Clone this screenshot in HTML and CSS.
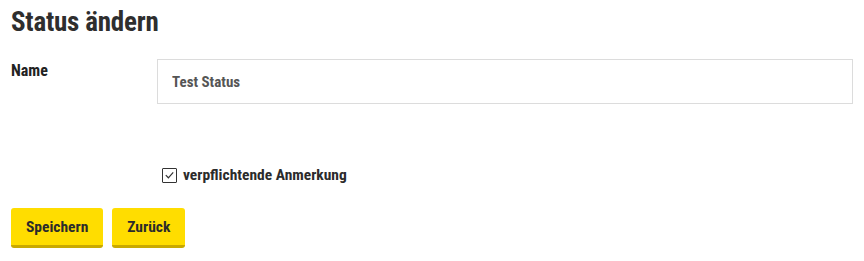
FILE: index.html
```html
<!DOCTYPE html>
<html lang="de">
<head>
<meta charset="utf-8">
<title>Status ändern</title>
<link rel="stylesheet" href="styles.css">
</head>
<body>
<main class="page">
  <h1 class="title">Status ändern</h1>
  <form class="form">
    <div class="row">
      <label class="label" for="name">Name</label>
      <input class="input" id="name" type="text" value="Test Status">
    </div>
    <div class="row row-check">
      <span></span>
      <label class="check">
        <span class="box"><svg viewBox="0 0 14 14" width="14" height="14"><path d="M3 7.2 L5.8 10 L11 4.2" fill="none" stroke="#333" stroke-width="1.3"/></svg></span>
        <span class="check-text">verpflichtende Anmerkung</span>
      </label>
    </div>
    <div class="actions">
      <button class="btn" type="button">Speichern</button>
      <button class="btn" type="button">Zurück</button>
    </div>
  </form>
</main>
</body>
</html>
```
FILE: styles.css
```css
* { box-sizing: border-box; }
html, body { margin: 0; padding: 0; background: #fff; }
body {
  font-family: "Roboto Condensed", "Liberation Sans Narrow", "DejaVu Sans Condensed", "Roboto", sans-serif;
  color: #2b2b2b;
}
.page { padding: 5px 11px 0 11px; }
.title {
  margin: 0;
  font-size: 27px;
  line-height: 34px;
  font-weight: 700;
  color: #2e2e2e;
  letter-spacing: -0.2px;
}
.form { margin-top: 20px; }
.row {
  display: grid;
  grid-template-columns: 146px 1fr;
}
.label {
  font-size: 16px;
  font-weight: 700;
  color: #222;
  padding-top: 2px;
  letter-spacing: 0;
}
.input {
  height: 45px;
  border: 1px solid #dcdcdc;
  border-radius: 0;
  padding: 0 14px;
  font-family: inherit;
  font-size: 15px;
  font-weight: 700;
  color: #555;
  outline: none;
  width: 100%;
}
.row-check { margin-top: 62px; }
.check {
  display: flex;
  align-items: center;
  gap: 6px;
  padding-left: 5px;
  font-size: 15.5px;
  font-weight: 700;
  color: #2b2b2b;
}
.box {
  width: 15px; height: 15px;
  border: 1px solid #333;
  border-radius: 1px;
  display: flex; align-items: center; justify-content: center;
  background: #fff;
}
.box svg { display: block; }
.actions {
  display: flex;
  gap: 9px;
  margin-top: 24px;
}
.btn {
  background: #ffdd00;
  border: none;
  border-bottom: 3px solid #c9a900;
  border-radius: 3px;
  height: 40px;
  padding: 0 15px;
  font-family: inherit;
  font-size: 15.5px;
  font-weight: 700;
  color: #2b2b2b;
  cursor: pointer;
}
```
